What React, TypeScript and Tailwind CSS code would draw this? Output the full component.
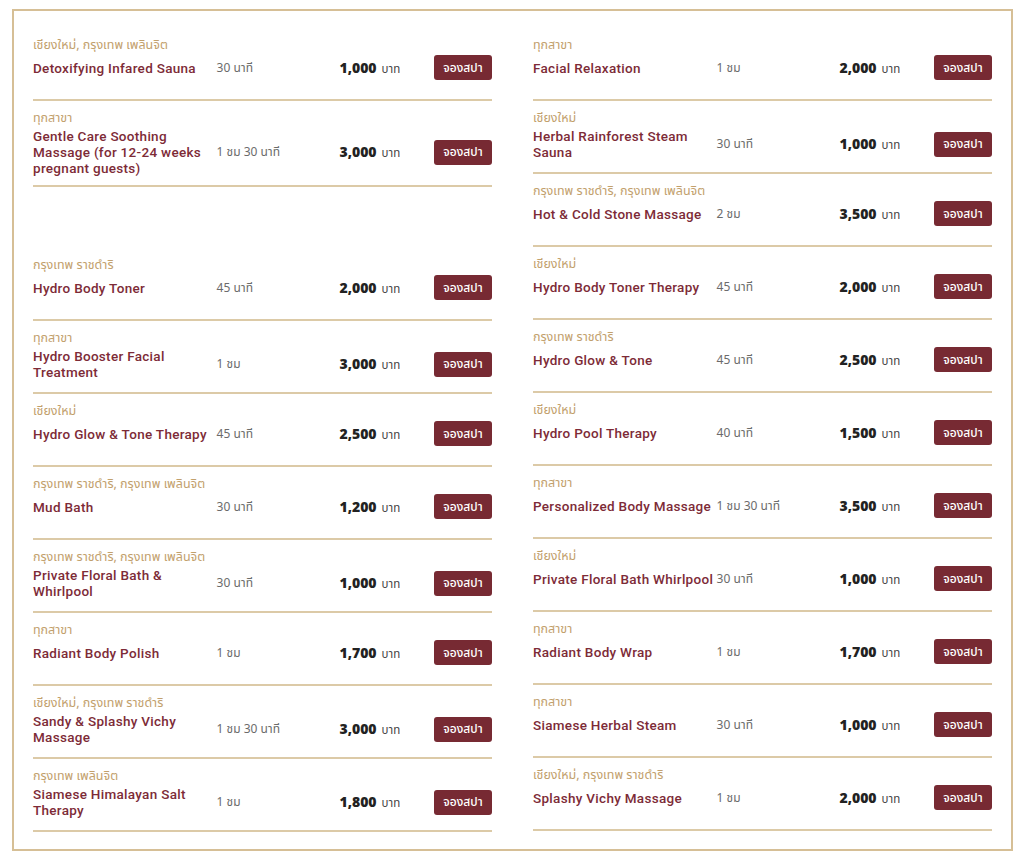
import React from "react";

type Item = { loc: string; name: string; dur: string; price: string };

const left: (Item | null)[] = [
  { loc: "เชียงใหม่, กรุงเทพ เพลินจิต", name: "Detoxifying Infared Sauna", dur: "30 นาที", price: "1,000" },
  { loc: "ทุกสาขา", name: "Gentle Care Soothing Massage (for 12-24 weeks pregnant guests)", dur: "1 ชม 30 นาที", price: "3,000" },
  null,
  { loc: "กรุงเทพ ราชดำริ", name: "Hydro Body Toner", dur: "45 นาที", price: "2,000" },
  { loc: "ทุกสาขา", name: "Hydro Booster Facial Treatment", dur: "1 ชม", price: "3,000" },
  { loc: "เชียงใหม่", name: "Hydro Glow & Tone Therapy", dur: "45 นาที", price: "2,500" },
  { loc: "กรุงเทพ ราชดำริ, กรุงเทพ เพลินจิต", name: "Mud Bath", dur: "30 นาที", price: "1,200" },
  { loc: "กรุงเทพ ราชดำริ, กรุงเทพ เพลินจิต", name: "Private Floral Bath & Whirlpool", dur: "30 นาที", price: "1,000" },
  { loc: "ทุกสาขา", name: "Radiant Body Polish", dur: "1 ชม", price: "1,700" },
  { loc: "เชียงใหม่, กรุงเทพ ราชดำริ", name: "Sandy & Splashy Vichy Massage", dur: "1 ชม 30 นาที", price: "3,000" },
  { loc: "กรุงเทพ เพลินจิต", name: "Siamese Himalayan Salt Therapy", dur: "1 ชม", price: "1,800" },
];

const right: (Item | null)[] = [
  { loc: "ทุกสาขา", name: "Facial Relaxation", dur: "1 ชม", price: "2,000" },
  { loc: "เชียงใหม่", name: "Herbal Rainforest Steam Sauna", dur: "30 นาที", price: "1,000" },
  { loc: "กรุงเทพ ราชดำริ, กรุงเทพ เพลินจิต", name: "Hot & Cold Stone Massage", dur: "2 ชม", price: "3,500" },
  { loc: "เชียงใหม่", name: "Hydro Body Toner Therapy", dur: "45 นาที", price: "2,000" },
  { loc: "กรุงเทพ ราชดำริ", name: "Hydro Glow & Tone", dur: "45 นาที", price: "2,500" },
  { loc: "เชียงใหม่", name: "Hydro Pool Therapy", dur: "40 นาที", price: "1,500" },
  { loc: "ทุกสาขา", name: "Personalized Body Massage", dur: "1 ชม 30 นาที", price: "3,500" },
  { loc: "เชียงใหม่", name: "Private Floral Bath Whirlpool", dur: "30 นาที", price: "1,000" },
  { loc: "ทุกสาขา", name: "Radiant Body Wrap", dur: "1 ชม", price: "1,700" },
  { loc: "ทุกสาขา", name: "Siamese Herbal Steam", dur: "30 นาที", price: "1,000" },
  { loc: "เชียงใหม่, กรุงเทพ ราชดำริ", name: "Splashy Vichy Massage", dur: "1 ชม", price: "2,000" },
];

const thai = { fontFamily: "'Noto Sans Thai', 'Noto Sans', 'Roboto', sans-serif" };

function Row({ item }: { item: Item }) {
  return (
    <div className="min-h-[73px] border-b-2 border-[#dccaa7] pt-[9px] pb-[9px]">
      <div className="text-[12.5px] leading-[18px] text-[#c2a06c]">{item.loc}</div>
      <div className="flex items-center">
        <div className="w-[40%] pr-[2px] text-[13.5px] leading-[16px] font-medium tracking-[0.3px] text-[#7d2b37] font-['Roboto',sans-serif]">
          {item.name}
        </div>
        <div className="w-[20%] text-[12px] text-[#6b6b6b]">{item.dur}</div>
        <div className="w-[20%] text-right whitespace-nowrap">
          <span className="text-[14px] font-extrabold text-[#222222] font-['Open_Sans',sans-serif]">{item.price}</span>
          <span className="ml-[5px] text-[11.5px] text-[#444444]">บาท</span>
        </div>
        <div className="w-[20%] flex justify-end">
          <button className="h-[25px] w-[58px] rounded-[3px] bg-[#772a33] text-[12px] font-medium text-white leading-none">
            จองสปา
          </button>
        </div>
      </div>
    </div>
  );
}

function Column({ items }: { items: (Item | null)[] }) {
  return (
    <div className="flex flex-col">
      {items.map((it, i) =>
        it ? <Row key={i} item={it} /> : <div key={i} className="h-[61px]" />
      )}
    </div>
  );
}

export default function App() {
  return (
    <div className="min-h-[861px] bg-white pt-[9px]" style={thai}>
      <div className="ml-[12px] w-[1001px] border-2 border-[#d6bf96] px-[19px] pt-[17px] pb-[17px]">
        <div className="grid grid-cols-2 gap-x-[41px]">
          <Column items={left} />
          <Column items={right} />
        </div>
      </div>
    </div>
  );
}
